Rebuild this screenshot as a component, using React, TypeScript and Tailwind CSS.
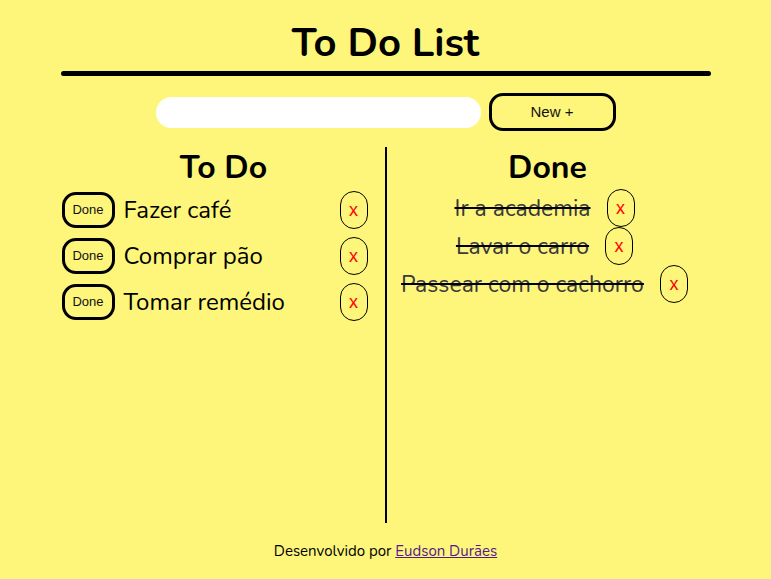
import React from "react";

const todo = ["Fazer café", "Comprar pão", "Tomar remédio"];
const done = ["Ir a academia", "Lavar o carro", "Passear com o cachorro"];

const round = { fontFamily: "Nunito, Lato, 'Noto Sans', sans-serif" };
const arial = { fontFamily: "'Liberation Sans', Arial, sans-serif" };

function XButton() {
  return (
    <button
      style={arial}
      className="w-[28px] h-[38px] rounded-full border border-black text-[18px] text-[#ff0000] leading-none flex items-center justify-center shrink-0"
    >
      x
    </button>
  );
}

export default function App() {
  return (
    <div style={round} className="min-h-[579px] bg-[#fef67b] text-black flex flex-col">
      <div className="w-[650px] mx-auto flex flex-col">
        <h1 className="text-[40px] font-bold text-center leading-none pt-[23px] pb-[8px]">To Do List</h1>
        <div className="h-[5px] rounded-full bg-black" />
      </div>

      <div className="flex justify-center items-center gap-2 mt-[17px]">
        <input className="w-[325px] h-[31px] rounded-full bg-white outline-none px-4" />
        <button
          style={arial}
          className="w-[127px] h-[38px] rounded-[14px] border-[3px] border-black text-[15px] text-[#111]"
        >
          New +
        </button>
      </div>

      <div className="w-[650px] mx-auto flex mt-[16px] h-[376px]">
        <section className="w-[324px] flex flex-col">
          <h2 className="text-[32px] font-bold text-center leading-none pt-[5px] pb-[7px] pl-[2px]">To Do</h2>
          <ul className="flex flex-col gap-[8px]">
            {todo.map((t) => (
              <li key={t} className="flex items-center pl-[1px] pr-[17px]">
                <button
                  style={arial}
                  className="w-[53px] h-[36px] rounded-[14px] border-[3px] border-black text-[13px] text-[#111] shrink-0"
                >
                  Done
                </button>
                <span className="flex-1 text-[24px] ml-[9px] leading-none">{t}</span>
                <XButton />
              </li>
            ))}
          </ul>
        </section>
        <div className="w-[2px] bg-black" />
        <section className="flex-1 flex flex-col">
          <h2 className="text-[32px] font-bold text-center leading-none pt-[5px] pb-[5px] pr-[2px]">Done</h2>
          <ul className="flex flex-col">
            {done.map((t) => (
              <li key={t} className="flex items-center justify-center gap-4 pr-[8px]">
                <span className="text-[23px] text-[#3a3a3a] line-through decoration-black decoration-2 leading-none">{t}</span>
                <XButton />
              </li>
            ))}
          </ul>
        </section>
      </div>

      <footer className="text-center text-[15px] mt-[17px]">
        Desenvolvido por{" "}
        <a href="#" className="text-[#551a8b] underline">
          Eudson Durães
        </a>
      </footer>
    </div>
  );
}
